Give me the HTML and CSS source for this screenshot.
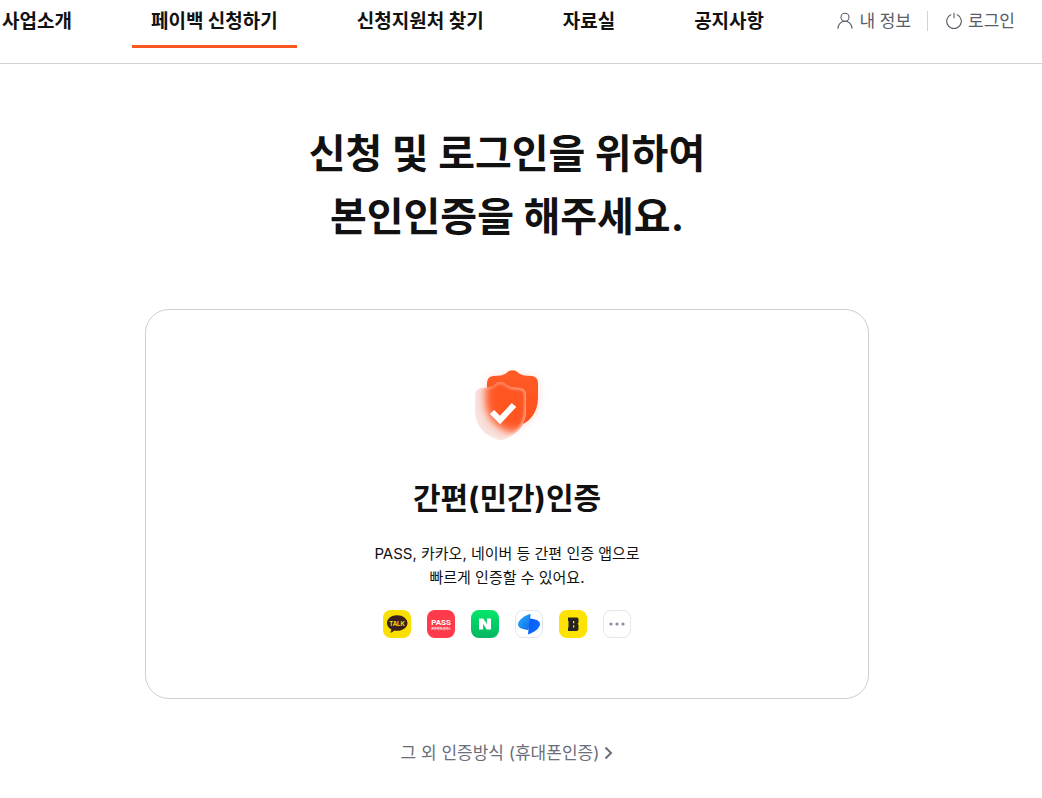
FILE: index.html
```html
<!DOCTYPE html>
<html lang="ko">
<head>
<meta charset="UTF-8">
<meta name="viewport" content="width=device-width, initial-scale=1.0">
<title>페이백 신청하기</title>
<link rel="stylesheet" href="styles.css">
</head>
<body>
<header class="header">
<nav class="menu">
<a href="#">사업소개</a>
<a href="#" class="active">페이백 신청하기</a>
<a href="#">신청지원처 찾기</a>
<a href="#">자료실</a>
<a href="#">공지사항</a>
</nav>
<div class="util">
<a href="#">
<svg width="16" height="18" viewBox="0 0 16 18" fill="none" stroke="currentColor" stroke-width="1.1"><circle cx="8" cy="5.2" r="4"/><path d="M1 16.8C1 12.2 4 9.3 8 9.3s7 2.9 7 7.5"/></svg>
내 정보
</a>
<a href="#">
<svg width="16" height="18" viewBox="0 0 16 18" fill="none" stroke="currentColor" stroke-width="1.1"><path d="M5.2 2.5a7.3 7.3 0 1 0 5.6 0M8 .8v5.4"/></svg>
로그인
</a>
</div>
</header>
<main class="container">
<h1>신청 및 로그인을 위하여<br>본인인증을 해주세요.</h1>
<section class="card">
<svg class="shield" width="80" height="80" viewBox="0 0 80 80">
<defs>
<linearGradient id="back" x1="0" y1="0" x2="0" y2="1"><stop offset="0" stop-color="#fd5c28"/><stop offset="1" stop-color="#ff4e18"/></linearGradient>
<linearGradient id="edge" x1="0" y1="0" x2="1" y2="0"><stop offset="0" stop-color="#fff" stop-opacity=".1"/><stop offset="1" stop-color="#fff" stop-opacity=".4"/></linearGradient>
<filter id="soft" x="-30%" y="-30%" width="160%" height="160%"><feGaussianBlur stdDeviation="1"/></filter>
<filter id="blur" x="-30%" y="-30%" width="160%" height="160%"><feGaussianBlur stdDeviation="4"/></filter>
<path id="shape" d="M22 1Q25.500-.500 29 1Q32 4 37 5.500L45 6Q51 7 51 13V28C51 43 42 53 29 57.500Q25.500 59 22 57.500C9 53 0 43 0 28V13Q0 7 6 6L14 5.500Q19 4 22 1Z"/>
<clipPath id="front"><use href="#shape" x="8" y="12"/></clipPath>
</defs>
<use href="#shape" x="20" y="1" fill="#ff5722" opacity=".2" filter="url(#blur)"/>
<use href="#shape" x="20" y="0" fill="url(#back)"/>
<g clip-path="url(#front)">
<path d="M0 0h80v80H0z" fill="#f9e0dc"/>
<use href="#shape" x="20" y="2" fill="#ff5722" filter="url(#blur)"/>
<use href="#shape" x="20" y="4" fill="#ff5722" opacity=".6" filter="url(#blur)"/>
<use href="#shape" x="8" y="12" fill="none" stroke="url(#edge)" stroke-width="4" filter="url(#soft)"/>
</g>
<path d="M25 42l8 8 14-15" fill="none" stroke="#fff" stroke-width="6"/>
</svg>
<h2>간편(민간)인증</h2>
<p>PASS, 카카오, 네이버 등 간편 인증 앱으로<br>빠르게 인증할 수 있어요.</p>
<ul class="apps">
<li>
<svg width="28" height="28" viewBox="0 0 28 28"><rect width="28" height="28" rx="8" fill="#f9e000"/><path d="M14 5.200c-5.700 0-10 3.500-10 7.800 0 2.800 1.700 5.100 4.400 6.500l-1 3.600 4.300-2.500q1.100.200 2.300.200c5.700 0 10.500-3.400 10.500-7.800s-4.800-7.800-10.500-7.800z" fill="#3b1e1e"/><text x="14" y="15.500" class="talk">TALK</text></svg>
</li>
<li>
<svg width="28" height="28" viewBox="0 0 28 28"><rect width="28" height="28" rx="8" fill="#ff3a4a"/><text x="14" y="15" class="pass">PASS</text><text x="14" y="20" class="pass-sub">본인확인서비스</text></svg>
</li>
<li>
<svg width="28" height="28" viewBox="0 0 28 28"><defs><linearGradient id="green" x1="0" y1="0" x2="0" y2="1"><stop offset="0" stop-color="#04e669"/><stop offset="1" stop-color="#06b562"/></linearGradient></defs><rect width="28" height="28" rx="8" fill="url(#green)"/><path d="M8 8.500h4.200l3.700 5.500V8.500H20v11h-4.200L12.100 14v5.500H8z" fill="#fff"/></svg>
</li>
<li>
<svg width="28" height="28" viewBox="0 0 28 28"><defs><linearGradient id="blue1" x1="0" y1="0" x2="1" y2="1"><stop offset="0" stop-color="#25b5f6"/><stop offset="1" stop-color="#1067f0"/></linearGradient><linearGradient id="blue2" x1="0" y1="0" x2="1" y2="1"><stop offset="0" stop-color="#0a50f5"/><stop offset="1" stop-color="#0878ff"/></linearGradient></defs><rect x=".5" y=".5" width="27" height="27" rx="7.500" fill="#fff" stroke="#e6e6ef"/><path d="M15.500 4C10 5 3 10 3 14.500c0 3 4 5 10.500 5.500z" fill="url(#blue1)"/><path d="M15.500 4l-1 4.500-1.500 16c5-1.500 12-6 12-10.500 0-3-4-5-10-5.500z" fill="url(#blue2)"/></svg>
</li>
<li>
<svg width="28" height="28" viewBox="0 0 28 28"><rect width="28" height="28" rx="8" fill="#ffe300"/><path fill-rule="evenodd" d="M9 7.500h9q1.500 0 1.500 1.500v3.500l-.8 1.300.8 1.200V19q0 2-2 2H9v-3.500h.5V11H9zM14 11v2.200h1.300V11zM14 15.200v2.300h1.300v-2.300z" fill="#242424"/></svg>
</li>
<li>
<svg width="28" height="28" viewBox="0 0 28 28"><rect x=".5" y=".5" width="27" height="27" rx="7.500" fill="#fff" stroke="#e6e6ef"/><g fill="#8b8e9e"><circle cx="8" cy="14" r="1.600"/><circle cx="14" cy="14" r="1.600"/><circle cx="20" cy="14" r="1.600"/></g></svg>
</li>
</ul>
</section>
<a href="#" class="other">그 외 인증방식 (휴대폰인증)
<svg width="9" height="14" viewBox="0 0 9 14" fill="none" stroke="currentColor" stroke-width="2"><path d="M1.500 1.500L7 7l-5.500 5.500"/></svg>
</a>
</main>
</body>
</html>
```

FILE: styles.css
```css
* {
box-sizing: border-box;
}
body {
margin: 0;
font-family: Inter, 'Noto Sans CJK KR', sans-serif;
color: #111;
background-color: #fff;
}
a {
color: inherit;
text-decoration: none;
}
h1, h2, p, ul {
margin: 0;
padding: 0;
}
.header {
display: flex;
justify-content: space-between;
height: 64px;
padding: 0 27px 0 2px;
border-bottom: 1px solid #d3d3d6;
white-space: nowrap;
}
.menu {
display: flex;
gap: 41px;
}
.menu a {
height: 48px;
padding: 0 19px;
font-size: 19px;
font-weight: 700;
line-height: 44px;
}
.menu a:first-child {
padding-left: 0;
}
.menu .active {
border-bottom: 3px solid #ff5722;
}
.util {
display: flex;
align-items: center;
height: 42px;
color: #5a5d69;
font-size: 17px;
}
.util a {
display: flex;
align-items: center;
gap: 6px;
line-height: 20px;
}
.util a + a {
margin-left: 16px;
padding-left: 18px;
border-left: 1px solid #d3d3d6;
}
.container {
display: flex;
flex-direction: column;
align-items: center;
padding: 58px 28px 0 0;
text-align: center;
}
h1 {
font-size: 40px;
font-weight: 700;
line-height: 63px;
}
.card {
display: flex;
flex-direction: column;
align-items: center;
width: 100%;
max-width: 724px;
margin-top: 61px;
padding: 60px 24px;
border: 1px solid #cdced6;
border-radius: 24px;
}
h2 {
margin-top: 26px;
font-size: 30px;
font-weight: 700;
line-height: 44px;
}
.card p {
margin-top: 22px;
font-size: 15px;
line-height: 24px;
}
.apps {
display: flex;
gap: 16px;
margin-top: 20px;
list-style: none;
}
.apps svg {
display: block;
}
.apps text {
text-anchor: middle;
font-weight: 700;
}
.talk {
font-size: 6px;
fill: #f9e000;
}
.pass {
font-family: Roboto, sans-serif;
font-size: 8px;
fill: #fff;
}
.pass-sub {
font-size: 3px;
fill: #fff;
}
.other {
display: flex;
align-items: center;
gap: 5px;
margin-top: 41px;
color: #6b6e7a;
font-size: 17px;
line-height: 26px;
}
```
